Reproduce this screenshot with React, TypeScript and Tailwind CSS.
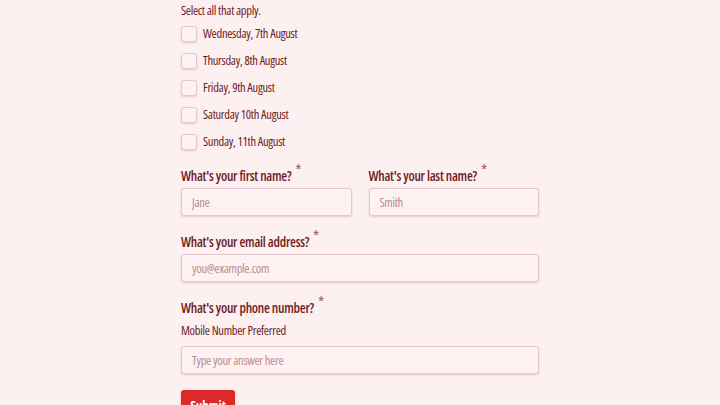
const days = [
  'Wednesday, 7th August',
  'Thursday, 8th August',
  'Friday, 9th August',
  'Saturday 10th August',
  'Sunday, 11th August',
]

export default function App() {
  return (
    <div
      className="h-[405px] overflow-hidden bg-[#fdf0f1] text-[#6e1c24] font-stretch-extra-condensed"
      style={{ fontFamily: '"Open Sans", Roboto, sans-serif' }}
    >
      <div className="ml-[181px] w-[358px]">
        <p className="pt-[2px] text-[12.5px] font-medium leading-[17px] tracking-[-0.3px]">Select all that apply.</p>

        {/* Checkboxes */}
        <div className="mt-[7px] flex flex-col gap-[11px]">
          {days.map((d) => (
            <label key={d} className="flex items-center gap-[6px] h-[16px]">
              <span className="w-[16px] h-[16px] rounded-[3px] border border-[#e8c8cc] bg-[#fdf1f2] shadow-[0_1px_2px_rgba(110,28,36,0.18)]" />
              <span className="text-[12.5px] font-medium leading-[16px] tracking-[-0.3px]">{d}</span>
            </label>
          ))}
        </div>

        {/* Name row */}
        <div className="mt-[13px] flex gap-[17px]">
          <div className="flex-1">
            <Label text="What's your first name?" />
            <Input placeholder="Jane" />
          </div>
          <div className="flex-1">
            <Label text="What's your last name?" />
            <Input placeholder="Smith" />
          </div>
        </div>

        <div className="mt-[13px]">
          <Label text="What's your email address?" />
          <Input placeholder="you@example.com" />
        </div>

        <div className="mt-[13px]">
          <Label text="What's your phone number?" />
          <p className="mt-[6px] text-[12.5px] font-medium leading-[17px] tracking-[-0.3px]">Mobile Number Preferred</p>
          <div className="mt-[7px]">
            <Input placeholder="Type your answer here" flat />
          </div>
        </div>

        <button className="mt-[16px] h-[30px] w-[54px] rounded-[3px] bg-[#dc2a2a] text-white text-[13px] font-bold leading-[30px] shadow-[0_1px_2px_rgba(110,28,36,0.25)]">
          Submit
        </button>
      </div>
    </div>
  )
}

function Label({ text }: { text: string }) {
  return (
    <div className="flex items-start h-[21px] whitespace-nowrap">
      <span className="mt-[3px] text-[13.5px] font-semibold leading-[20px] tracking-[-0.25px]">{text}</span>
      <span className="ml-[4px] text-[16px] text-[#a0646b] leading-[14px]">*</span>
    </div>
  )
}

function Input({ placeholder, flat }: { placeholder: string; flat?: boolean }) {
  return (
    <input
      placeholder={placeholder}
      className={`${flat ? '' : 'mt-[4px]'} block w-full h-[28px] px-[10px] rounded-[3px] border border-[#e8c8cc] bg-[#fdf1f2] text-[12.5px] tracking-[-0.3px] text-[#6e1c24] placeholder:text-[#b98c92] shadow-[0_1px_2px_rgba(110,28,36,0.18)] outline-none font-stretch-extra-condensed`}
      style={{ fontFamily: 'inherit' }}
    />
  )
}
